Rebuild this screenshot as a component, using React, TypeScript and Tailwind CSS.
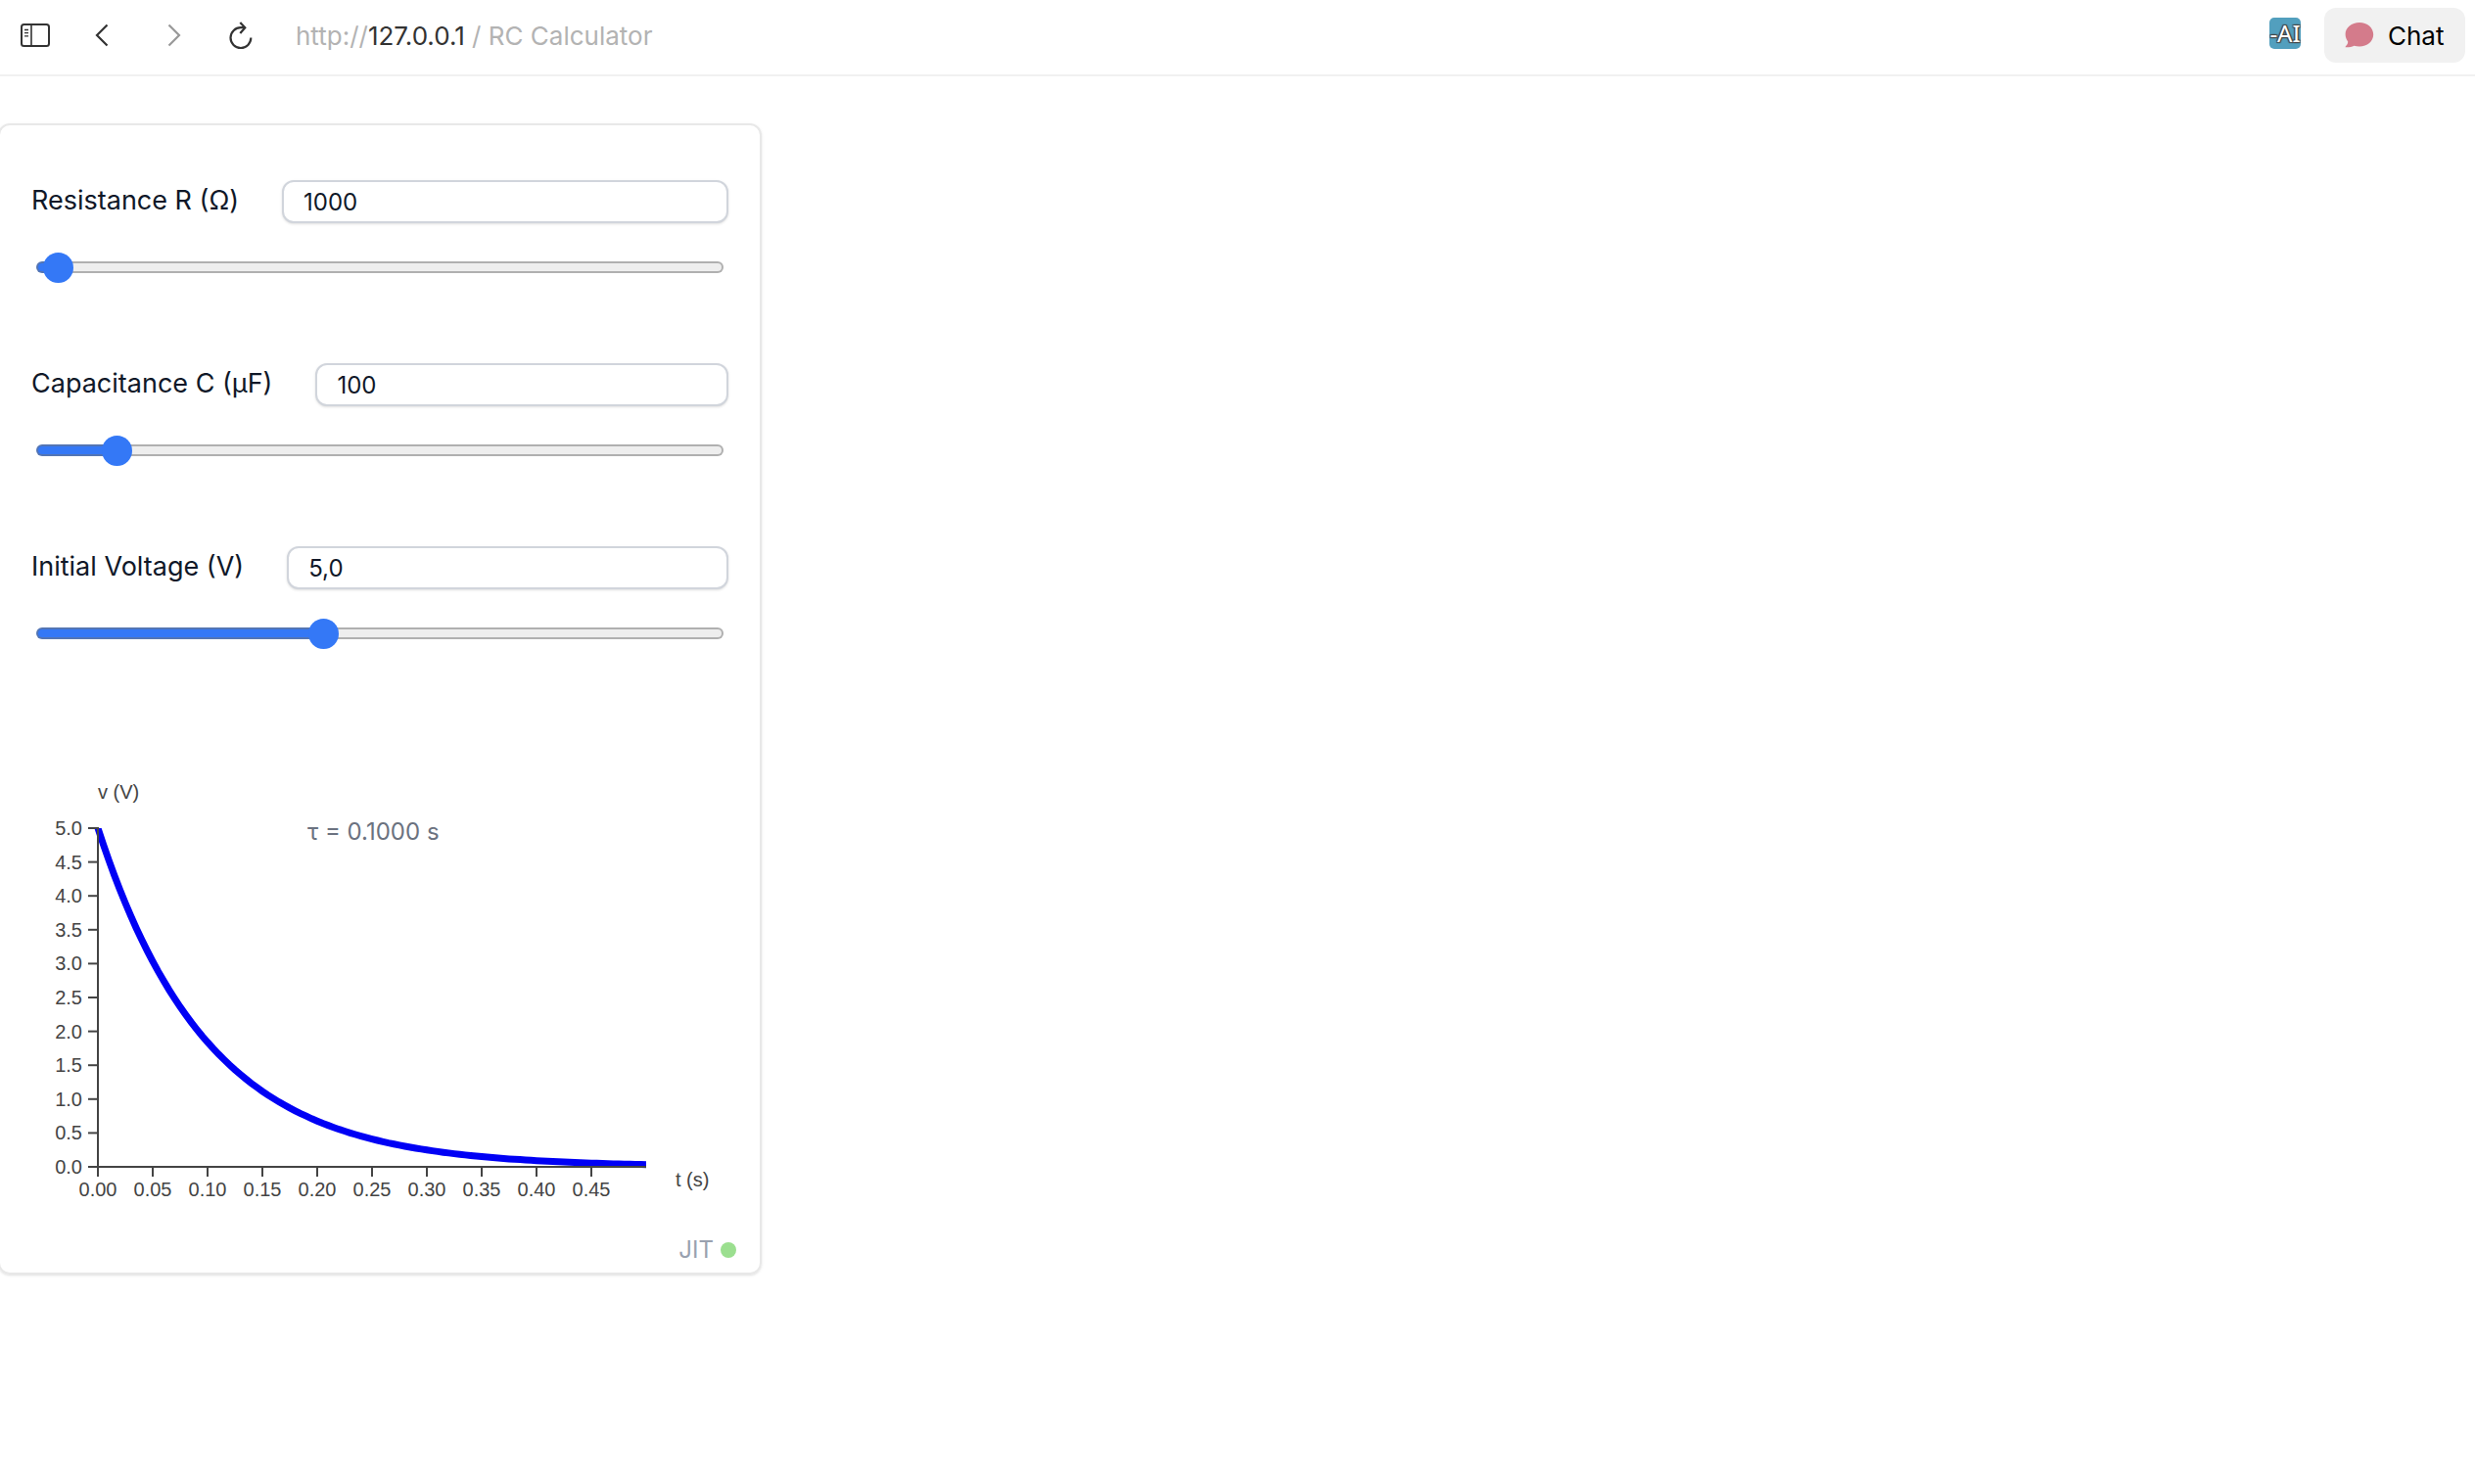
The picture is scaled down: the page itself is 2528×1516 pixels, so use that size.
import { useId, useState } from "react";

const PLOT = { left: 100, top: 76, width: 560, height: 346 };
const Y_TICKS = [0, 0.5, 1, 1.5, 2, 2.5, 3, 3.5, 4, 4.5, 5];
const X_TICKS = [0, 0.05, 0.1, 0.15, 0.2, 0.25, 0.3, 0.35, 0.4, 0.45];

function SidebarIcon() {
  return (
    <svg width="32" height="26" viewBox="0 0 32 26" fill="none" stroke="#333" aria-hidden="true">
      <rect x="2" y="2" width="28" height="22" rx="2.5" strokeWidth="2" />
      <path d="M12 2v22" strokeWidth="1.6" />
      <path d="M5 7.5h4M5 10.7h4M5 13.9h4" strokeWidth="1.3" />
    </svg>
  );
}

function Chevron({ dir }: { dir: "left" | "right" }) {
  return (
    <svg width="16" height="26" viewBox="0 0 16 26" fill="none" strokeWidth="2.2" aria-hidden="true" stroke={dir === "left" ? "#333" : "#999"}>
      <path d={dir === "left" ? "M13.5 2.5 3 13l10.5 10.5" : "M2.5 2.5 13 13 2.5 23.5"} />
    </svg>
  );
}

function ReloadIcon() {
  return (
    <svg width="26" height="30" viewBox="0 0 26 30" fill="none" stroke="#333" strokeWidth="2.2" aria-hidden="true">
      <path d="M23.3 17.5A10.4 10.4 0 1 1 13 7.2h4" />
      <path d="M12.3 2 17.3 7.2 12.3 13" />
    </svg>
  );
}

function BubbleIcon() {
  return (
    <svg width="30" height="28" viewBox="0 0 30 28" aria-hidden="true">
      <path fill="#d47b8b" d="M15 1C7 1 .6 6.300.6 13c0 3.200 1.300 5.800 2.600 7.600C3.200 22.500 2.200 24.300.8 25.400c-.4.500-.2.900.3.900 3 .1 6-.3 8.400-1.500 1.800.5 3.600.7 5.500.7 8 0 14.200-5.500 14.200-12.300S23 1 15 1Z" />
    </svg>
  );
}

function Header() {
  return (
    <header className="flex h-[78px] items-center justify-between border-b-2 border-[#f1f1f1] pr-[10px] pl-5 pb-1">
      <div className="flex items-center">
        <button type="button" aria-label="Toggle sidebar"><SidebarIcon /></button>
        <button type="button" aria-label="Back" className="ml-11"><Chevron dir="left" /></button>
        <button type="button" aria-label="Forward" className="ml-[58px]"><Chevron dir="right" /></button>
        <button type="button" aria-label="Reload" className="ml-[47px]"><ReloadIcon /></button>
        <p className="ml-[43px] pt-0.5 text-[26px] leading-8 whitespace-nowrap text-[#b3b3b3]">
          http://<span className="text-[#333]">127.0.0.1</span> / RC Calculator
        </p>
      </div>
      <div className="flex items-center gap-6">
        <span className="mb-1 flex size-8 items-center justify-center rounded-[5px] bg-[#529fbe] font-['Noto_Sans',sans-serif] text-2xl leading-8 text-white [text-shadow:1px_1px_1px_#444,-1px_-1px_1px_#444,1px_-1px_1px_#444,-1px_1px_1px_#444]">
          -AI
        </span>
        <button type="button" className="flex h-14 w-36 items-center gap-[14px] rounded-xl bg-[#f1f1f1] pl-[21px] text-[26px] leading-8 text-black">
          <BubbleIcon />
          <span className="pt-0.5">Chat</span>
        </button>
      </div>
    </header>
  );
}

interface ControlProps {
  label: string;
  text: string;
  max: number;
  value: number;
  step: number;
  onChange: (value: number) => void;
}

function Control({ label, text, max, value, step, onChange }: ControlProps) {
  const id = useId();
  const ratio = value / max;
  return (
    <div className="flex flex-col">
      <div className="flex items-start gap-11">
        <label htmlFor={id} className="text-[27px] leading-[42px] whitespace-nowrap">{label}</label>
        <input
          id={id}
          type="text"
          value={text}
          onChange={(e) => onChange(Number(e.target.value.replace(",", ".")) || 0)}
          className="h-11 min-w-0 flex-1 rounded-xl border-2 border-gray-300 bg-white px-5 text-2xl leading-10 shadow-sm"
        />
      </div>
      <input
        type="range"
        aria-label={label}
        min={0}
        max={max}
        step={step}
        value={value}
        onChange={(e) => onChange(Number(e.target.value))}
        style={{
          backgroundImage: `linear-gradient(to right, #3478f6 calc(15px + (100% - 30px) * ${ratio}), #eeeeee 0)`,
        }}
        className="mx-[5px] mt-[39px] h-3 appearance-none rounded-full border-2 border-[#72727280] bg-origin-border [&::-webkit-slider-thumb]:-mx-[2px] [&::-webkit-slider-thumb]:size-[31px] [&::-webkit-slider-thumb]:appearance-none [&::-webkit-slider-thumb]:rounded-full [&::-webkit-slider-thumb]:bg-[#3478f6]"
      />
    </div>
  );
}

function DecayChart({ tau, voltage }: { tau: number; voltage: number }) {
  const { left, top, width, height } = PLOT;
  const bottom = top + height;
  const x = (t: number) => left + (t / 0.5) * width;
  const y = (v: number) => bottom - (v / 5) * height;
  const points = Array.from({ length: 101 }, (_, i) => {
    const t = i * 0.005;
    return `${x(t).toFixed(1)},${y(voltage * Math.exp(-t / tau)).toFixed(1)}`;
  }).join(" ");
  return (
    <svg viewBox="0 0 744 470" className="w-[744px] font-['Liberation_Sans',sans-serif] text-[20px]" fill="#444" role="img" aria-label="Capacitor voltage over time">
      <clipPath id="plot">
        <rect x={left - 4} y={top} width={width + 4} height={height + 4} />
      </clipPath>
      <polyline points={points} fill="none" stroke="#0000f5" strokeWidth="7" clipPath="url(#plot)" />
      <g stroke="#444" strokeWidth="2">
        <path d={`M${left} ${top - 1}V${bottom}H${left + width}`} fill="none" />
        {Y_TICKS.map((v) => <line key={v} x1={left - 10} x2={left} y1={y(v)} y2={y(v)} />)}
        {X_TICKS.map((t) => <line key={t} x1={x(t)} x2={x(t)} y1={bottom} y2={bottom + 10} />)}
      </g>
      {Y_TICKS.map((v) => <text key={v} x={left - 16} y={y(v) + 7} textAnchor="end">{v.toFixed(1)}</text>)}
      {X_TICKS.map((t) => <text key={t} x={x(t)} y={bottom + 30} textAnchor="middle">{t.toFixed(2)}</text>)}
      <text x={left} y="46">v (V)</text>
      <text x="690" y="442">t (s)</text>
      <text x="314" y="88" fill="#6b7280" className="font-['Inter',sans-serif] text-[24px]">τ = {tau.toFixed(4)} s</text>
    </svg>
  );
}

export default function App() {
  const [r, setR] = useState(1000);
  const [c, setC] = useState(100);
  const [v, setV] = useState(5);
  return (
    <div className="min-h-screen bg-white font-['Inter','Liberation_Sans',sans-serif]">
      <Header />
      <main className="pt-12">
        <section className="-ml-[2px] w-full max-w-[780px] rounded-xl border-2 border-[#e8e8e8] pb-[7px] text-gray-900 shadow-sm">
          <div className="flex flex-col gap-[92px] px-8 pt-14">
            <Control label="Resistance R (Ω)" text={String(r)} max={100000} step={100} value={r} onChange={setR} />
            <Control label="Capacitance C (μF)" text={String(c)} max={1000} step={1} value={c} onChange={setC} />
            <Control label="Initial Voltage (V)" text={v.toFixed(1).replace(".", ",")} max={12} step={0.1} value={v} onChange={setV} />
          </div>
          <div className="mt-[117px]">
            <DecayChart tau={(r * c) / 1000000} voltage={v} />
          </div>
          <div className="mt-[21px] flex items-center justify-end gap-[7px] pr-6 text-2xl leading-8 text-gray-400">
            JIT
            <span className="size-4 rounded-full bg-[#9bdf8f]" />
          </div>
        </section>
      </main>
    </div>
  );
}
